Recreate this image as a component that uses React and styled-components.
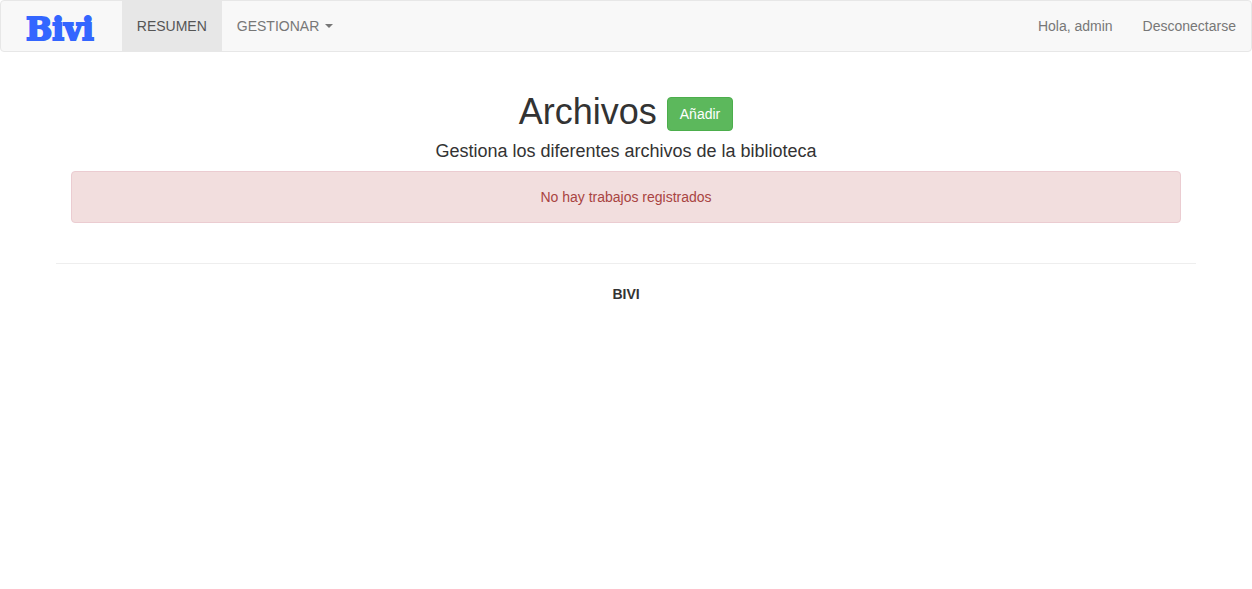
import React from "react";
import styled, { createGlobalStyle } from "styled-components";

const GlobalStyle = createGlobalStyle`
  *, *::before, *::after { box-sizing: border-box; }
  body {
    margin: 0;
    background: #fff;
    color: #333;
    font: 14px/20px "Liberation Sans", Arial, sans-serif;
  }
`;

const Navbar = styled.nav`
  display: flex;
  flex-wrap: wrap;
  min-height: 52px;
  margin-bottom: 20px;
  border: 1px solid #e7e7e7;
  border-radius: 4px;
  background: #f8f8f8;
`;

const Brand = styled.a`
  display: flex;
  align-items: center;
  padding: 6px 28px 0 25px;
  color: #36f;
  font: bold 31px/44px "DejaVu Serif", serif;
  text-decoration: none;
  -webkit-text-stroke: 2px #36f;
`;

const NavList = styled.ul`
  display: flex;
  margin: 0;
  margin-left: ${({ $end }) => ($end ? "auto" : "0")};
  padding: 0;
  list-style: none;
`;

const navItem = ({ $active }) => `
  display: flex;
  align-items: center;
  gap: 6px;
  padding: 15px;
  border: 0;
  background: ${$active ? "#e7e7e7" : "transparent"};
  color: ${$active ? "#555" : "#777"};
  font: inherit;
  text-decoration: none;
  cursor: pointer;
`;

const NavLink = styled.a`
  ${navItem}
`;

const NavButton = styled.button`
  ${navItem}
`;

const Caret = styled.span`
  border-top: 4px solid currentColor;
  border-right: 4px solid transparent;
  border-left: 4px solid transparent;
`;

const Container = styled.div`
  max-width: 1170px;
  margin: 0 auto;
  padding: 0 15px;
  text-align: center;
`;

const Content = styled.main`
  padding: 20px 15px 0;
`;

const TitleRow = styled.div`
  display: flex;
  justify-content: center;
  align-items: flex-end;
  gap: 10px;
`;

const Title = styled.h1`
  margin: 0;
  font-size: 36px;
  font-weight: 500;
  line-height: 39px;
`;

const AddButton = styled.button`
  padding: 6px 12px;
  border: 1px solid #4cae4c;
  border-radius: 4px;
  background: #5cb85c;
  color: #fff;
  font: inherit;
  cursor: pointer;
`;

const Subtitle = styled.h2`
  margin: 10px 0;
  font-size: 18px;
  font-weight: 500;
  line-height: 20px;
`;

const Alert = styled.div`
  padding: 15px;
  border: 1px solid #ebccd1;
  border-radius: 4px;
  background: #f2dede;
  color: #a94442;
`;

const Divider = styled.hr`
  height: 1px;
  margin: 40px 0 20px;
  border: 0;
  background: #eee;
`;

const Footer = styled.footer`
  font-weight: bold;
`;

export default function App() {
  return (
    <>
      <GlobalStyle />
      <Navbar>
        <Brand href="#">Bivi</Brand>
        <NavList>
          <li><NavLink href="#" $active aria-current="page">RESUMEN</NavLink></li>
          <li>
            <NavButton type="button" aria-haspopup="true">
              GESTIONAR<Caret />
            </NavButton>
          </li>
        </NavList>
        <NavList $end>
          <li><NavLink href="#">Hola, admin</NavLink></li>
          <li><NavLink href="#">Desconectarse</NavLink></li>
        </NavList>
      </Navbar>
      <Container>
        <Content>
          <TitleRow>
            <Title>Archivos</Title>
            <AddButton type="button">Añadir</AddButton>
          </TitleRow>
          <Subtitle>Gestiona los diferentes archivos de la biblioteca</Subtitle>
          <Alert role="alert">No hay trabajos registrados</Alert>
        </Content>
        <Divider />
        <Footer>BIVI</Footer>
      </Container>
    </>
  );
}
